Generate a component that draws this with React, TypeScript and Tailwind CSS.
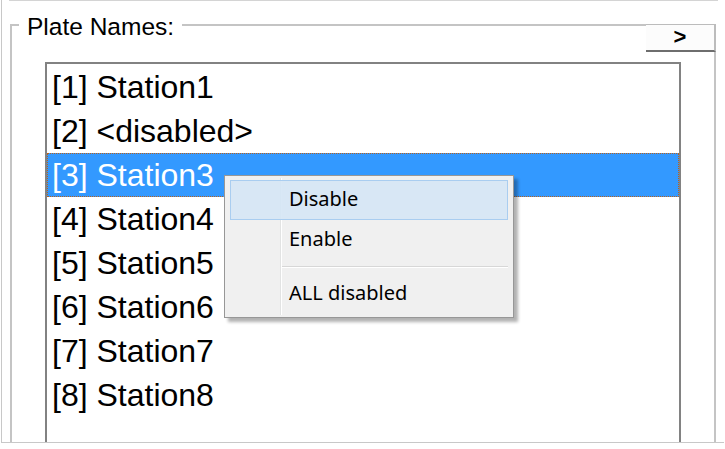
const stations = [
  "[1] Station1",
  "[2] <disabled>",
  "[3] Station3",
  "[4] Station4",
  "[5] Station5",
  "[6] Station6",
  "[7] Station7",
  "[8] Station8",
];

const selected = 2;

function ContextMenu() {
  return (
    <div className="absolute left-[224px] top-[175px] w-[290px] h-[143px] border border-[#979797] bg-[#f0f0f0] shadow-[4px_4px_3px_rgba(0,0,0,0.3)] pt-[4px] px-[5px] font-['Noto_Sans',sans-serif] text-[20px] text-black">
      {/* gutter line */}
      <div className="absolute left-[55px] top-[2px] bottom-[2px] w-[2px] border-l border-[#e2e3e3] bg-white" />
      <div className="relative flex h-[40px] items-center pl-[58px] border border-[#a9cdf0] bg-[#d5e5f5]/90 pb-[2px]">
        Disable
      </div>
      <div className="flex h-[40px] items-center pl-[59px] pb-[2px]">Enable</div>
      <div className="h-[14px] flex flex-col justify-center pl-[52px]">
        <div className="h-px bg-[#d7d7d7]" />
        <div className="h-px bg-white" />
      </div>
      <div className="flex h-[40px] items-center pl-[59px] pb-[2px]">ALL disabled</div>
    </div>
  );
}

export default function App() {
  return (
    <div className="relative w-[725px] h-[449px] bg-white font-['Liberation_Sans',Arial,sans-serif] text-black">
      <div className="ml-px w-[723px] h-[443px] border-l border-b border-[#c8c8c8] overflow-hidden flex flex-col">
        <div className="h-px ml-[7px] w-[709px] bg-[#d4d4d4] shrink-0" />

        <div className="relative mt-[23px] ml-[8px] w-[706px] flex-1 border-t-2 border-x-2 border-[#c4c4c4]">
          <span className="absolute left-[7px] -top-[13px] bg-white px-[8px] text-[24.5px] leading-[28px]">
            Plate Names:
          </span>
          <button className="absolute -right-[2px] -top-[2px] w-[70px] h-[28px] bg-[#fcfcfc] border-t border-r-2 border-[#bcbcbc] border-b-2 border-b-[#6e6e6e] flex items-center justify-center text-[22px] font-semibold leading-none pb-[2px]">
            &gt;
          </button>

          <div className="ml-[33px] mt-[36px] w-[636px] h-[420px] border-2 border-[#828282] bg-white pt-px">
            {stations.map((s, i) => (
              <div
                key={s}
                className={
                  i === selected
                    ? "h-[44px] pl-[4px] text-[32px] leading-[42px] bg-[#3399ff] text-white border border-dotted border-[#b8621e]"
                    : "h-[44px] pl-[5px] text-[32px] leading-[44px]"
                }
              >
                {s}
              </div>
            ))}
          </div>
        </div>
      </div>

      <ContextMenu />
    </div>
  );
}
